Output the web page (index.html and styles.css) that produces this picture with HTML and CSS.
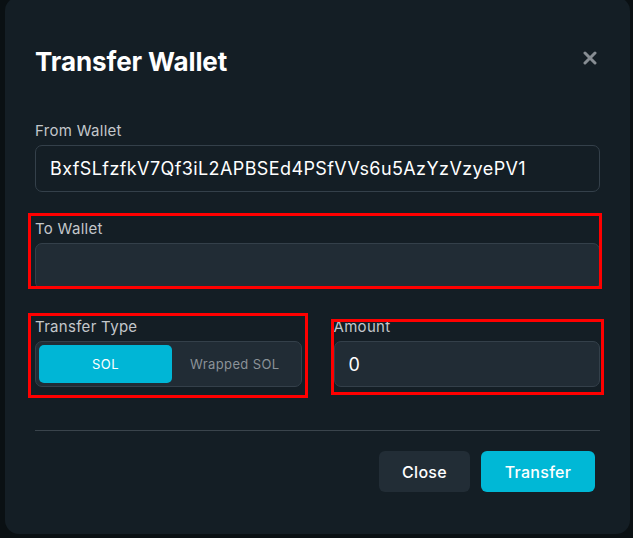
FILE: index.html
```html
<!DOCTYPE html>
<html lang="en">
<head>
    <meta charset="UTF-8">
    <meta name="viewport" content="width=device-width, initial-scale=1.0">
    <title>Transfer Wallet</title>
    <link rel="stylesheet" href="styles.css">
</head>
<body>
    <div class="modal">
        <div class="modal-header">
            <h2>Transfer Wallet</h2>
            <button class="close-x" aria-label="Close">
                <svg width="14" height="14" viewBox="0 0 14 14">
                    <path d="M2 2 L12 12 M12 2 L2 12" stroke="#878d93" stroke-width="3" stroke-linecap="round"/>
                </svg>
            </button>
        </div>

        <div class="modal-body">
            <div class="field">
                <label>From Wallet</label>
                <input class="input input-readonly" type="text" value="BxfSLfzfkV7Qf3iL2APBSEd4PSfVVs6u5AzYzVzyePV1" readonly>
            </div>

            <div class="field">
                <label>To Wallet</label>
                <input class="input" type="text" value="">
            </div>

            <div class="field-row">
                <div class="field">
                    <label>Transfer Type</label>
                    <div class="segmented">
                        <span class="seg active">SOL</span>
                        <span class="seg">Wrapped SOL</span>
                    </div>
                </div>
                <div class="field">
                    <label>Amount</label>
                    <input class="input" type="text" value="0">
                </div>
            </div>
        </div>

        <div class="modal-footer">
            <button class="btn btn-dark">Close</button>
            <button class="btn btn-cyan">Transfer</button>
        </div>

        <!-- review markers -->
        <div class="mark mark-to"></div>
        <div class="mark mark-type"></div>
        <div class="mark mark-amount"></div>
    </div>
</body>
</html>
```

FILE: styles.css
```css
* {
    margin: 0;
    padding: 0;
    box-sizing: border-box;
}

body {
    font-family: Inter, 'Open Sans', sans-serif;
    background: #0a1013;
    height: 538px;
    overflow: hidden;
}

.modal {
    position: relative;
    margin: -3px 3px 0 5px;
    height: 537px;
    background: #141e25;
    border-radius: 14px;
    padding: 48px 30px 0 30px;
}

.modal-header {
    display: flex;
    justify-content: space-between;
    align-items: center;
    height: 32px;
}

.modal-header h2 {
    color: #ffffff;
    font-size: 26px;
    font-weight: 700;
    letter-spacing: -0.1px;
}

.close-x {
    background: none;
    border: none;
    width: 14px;
    height: 14px;
    margin-right: 3px;
    margin-top: -6px;
    display: flex;
}

.modal-body {
    margin-top: 44px;
    display: flex;
    flex-direction: column;
    gap: 27px;
}

.field {
    display: flex;
    flex-direction: column;
    gap: 4px;
}

.field label {
    color: #c3c7cb;
    font-size: 15px;
    line-height: 20px;
    letter-spacing: 0.3px;
}

.input {
    height: 46px;
    width: 100%;
    border: 1px solid #34404a;
    border-radius: 7px;
    background: #212c35;
    color: #ffffff;
    font-family: inherit;
    font-size: 18px;
    padding: 0 14px;
    outline: none;
}

.input-readonly {
    height: 47px;
    background: #141e25;
    letter-spacing: 0.4px;
}

.field-row {
    display: grid;
    grid-template-columns: 1fr 1fr;
    gap: 32px;
    margin-top: 1px;
}

.segmented {
    display: flex;
    height: 46px;
    padding: 3px;
    background: #212c35;
    border: 1px solid #34404a;
    border-radius: 7px;
}

.seg {
    flex: 1;
    display: flex;
    align-items: center;
    justify-content: center;
    font-size: 13px;
    letter-spacing: 0.4px;
    color: #8b9298;
    border-radius: 5px;
}

.seg.active {
    flex: 0 0 133px;
    background: #00b6d6;
    color: #ffffff;
}

.modal-footer {
    margin-top: 43px;
    border-top: 1px solid #3a444c;
    padding: 20px 5px 0 0;
    display: flex;
    justify-content: flex-end;
    gap: 11px;
}

.btn {
    height: 41px;
    border: none;
    border-radius: 6px;
    font-family: inherit;
    font-size: 16px;
    font-weight: 500;
    letter-spacing: 0.3px;
    color: #ffffff;
    cursor: pointer;
}

.btn-dark {
    width: 91px;
    background: #222d36;
}

.btn-cyan {
    width: 114px;
    background: #00b8d6;
}

.mark {
    position: absolute;
    border: 3px solid #ff0000;
    pointer-events: none;
}

.mark-to {
    left: 23px;
    top: 216px;
    width: 574px;
    height: 76px;
}

.mark-type {
    left: 23px;
    top: 316px;
    width: 280px;
    height: 85px;
}

.mark-amount {
    left: 326px;
    top: 322px;
    width: 273px;
    height: 76px;
}
```
